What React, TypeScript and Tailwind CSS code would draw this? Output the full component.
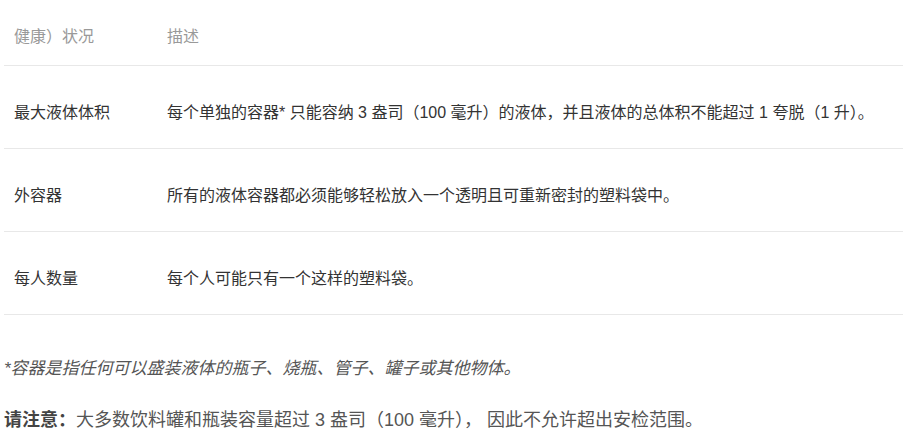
import React from "react";

const rows = [
  {
    label: "最大液体体积",
    desc: "每个单独的容器* 只能容纳 3 盎司（100 毫升）的液体，并且液体的总体积不能超过 1 夸脱（1 升）。",
  },
  {
    label: "外容器",
    desc: "所有的液体容器都必须能够轻松放入一个透明且可重新密封的塑料袋中。",
  },
  {
    label: "每人数量",
    desc: "每个人可能只有一个这样的塑料袋。",
  },
];

const App = () => {
  return (
    <div className="min-h-[447px] w-[903px] bg-white font-['Liberation_Sans','Noto_Sans_CJK_SC',sans-serif]">
      <div className="ml-[4px]">
        <div className="flex border-b border-[#e8e8e8] pt-[25px] pb-[16px] text-[16px] leading-[24px] text-[#999]">
          <div className="w-[153px] shrink-0 pl-[10px]">健康）状况</div>
          <div className="flex-1 pl-[10px]">描述</div>
        </div>
        {rows.map((r) => (
          <div
            key={r.label}
            className="flex border-b border-[#e8e8e8] pt-[35px] pb-[23px] text-[16px] leading-[24px] text-[#333]"
          >
            <div className="w-[153px] shrink-0 pl-[10px]">{r.label}</div>
            <div className="flex-1 pl-[10px]">{r.desc}</div>
          </div>
        ))}
      </div>
      <p className="mt-[42px] pl-[4px] text-[17px] leading-[24px] text-[#555] italic">
        *容器是指任何可以盛装液体的瓶子、烧瓶、管子、罐子或其他物体。
      </p>
      <p className="mt-[27px] pl-[4px] text-[18px] leading-[24px] text-[#555]">
        <span className="font-bold text-[#444]">请注意：</span>大多数饮料罐和瓶装容量超过 3 盎司（100 毫升）， 因此不允许超出安检范围。
      </p>
    </div>
  );
};

export default App;
